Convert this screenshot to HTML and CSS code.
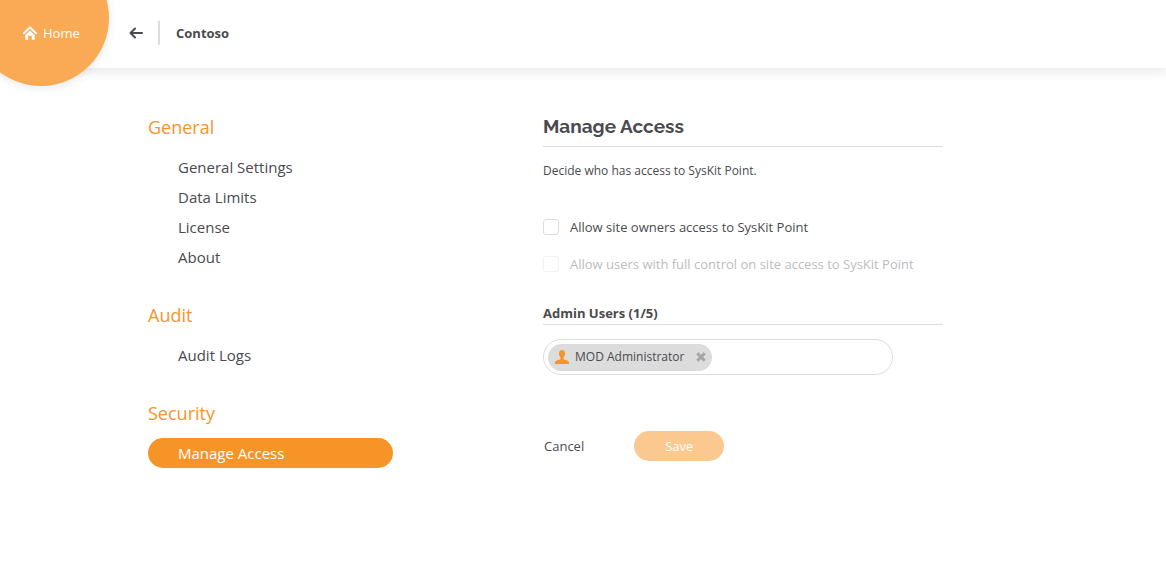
FILE: index.html
```html
<!DOCTYPE html>
<html lang="en">
<head>
<meta charset="utf-8">
<meta name="viewport" content="width=device-width, initial-scale=1">
<title>Manage Access - Contoso</title>
<link rel="stylesheet" href="styles.css">
</head>
<body>
<header class="topbar">
  <a class="home" href="#">
    <svg class="home-icon" viewBox="0 0 14 14" aria-hidden="true">
      <path d="M1 7.200 7 1.400l6 5.800" fill="none" stroke="currentColor" stroke-width="2" stroke-linecap="round" stroke-linejoin="round"/>
      <path d="M7 4.600 11.800 9.200V13q0 .8-.8.8H8.800V10.500q0-.8-.8-.8H6q-.8 0-.8.8v3.300H3q-.8 0-.8-.8V9.200z" fill="currentColor"/>
    </svg>
    <span>Home</span>
  </a>
  <button class="back" type="button" aria-label="Back">
    <svg class="back-icon" viewBox="0 0 14 12" aria-hidden="true">
      <path d="M13 6H2M6 1.500 1.500 6 6 10.500" fill="none" stroke="currentColor" stroke-width="2" stroke-linecap="round" stroke-linejoin="round"/>
    </svg>
  </button>
  <span class="tenant">Contoso</span>
</header>
<div class="page">
  <nav class="sidebar" aria-label="Settings">
    <section>
      <h2 class="group-title">General</h2>
      <ul class="group-list">
        <li><a class="nav-link" href="#">General Settings</a></li>
        <li><a class="nav-link" href="#">Data Limits</a></li>
        <li><a class="nav-link" href="#">License</a></li>
        <li><a class="nav-link" href="#">About</a></li>
      </ul>
    </section>
    <section>
      <h2 class="group-title">Audit</h2>
      <ul class="group-list">
        <li><a class="nav-link" href="#">Audit Logs</a></li>
      </ul>
    </section>
    <section>
      <h2 class="group-title">Security</h2>
      <ul class="group-list">
        <li><a class="nav-link nav-link-active" href="#" aria-current="page">Manage Access</a></li>
      </ul>
    </section>
  </nav>
  <main class="content">
    <h1 class="title">Manage Access</h1>
    <p class="intro">Decide who has access to SysKit Point.</p>
    <form>
      <div class="options">
        <label class="option"><input class="check" type="checkbox"><span>Allow site owners access to SysKit Point</span></label>
        <label class="option option-disabled"><input class="check" type="checkbox" disabled><span>Allow users with full control on site access to SysKit Point</span></label>
      </div>
      <label class="field-title" for="admins">Admin Users (1/5)</label>
      <div class="picker">
        <span class="chip">
          <svg class="user-icon" viewBox="0 0 14 14" aria-hidden="true">
            <path d="M7 0C9 0 10 1.300 10 3.400 10 5.400 9.300 6.500 8.600 7.200V9.200C9.500 10 13.800 10.200 14 12.300V14H0V12.300C.2 10.200 4.500 10 5.400 9.200V7.200C4.700 6.500 4 5.400 4 3.400 4 1.300 5 0 7 0z" fill="currentColor"/>
          </svg>
          <span>MOD Administrator</span>
          <button class="remove" type="button" aria-label="Remove MOD Administrator">
            <svg class="remove-icon" viewBox="0 0 10 10" aria-hidden="true">
              <path d="M1.300 1.300l7.400 7.400M8.700 1.300 1.300 8.700" stroke="currentColor" stroke-width="3"/>
            </svg>
          </button>
        </span>
        <input class="picker-input" id="admins" type="text">
      </div>
      <div class="actions">
        <button class="cancel" type="button">Cancel</button>
        <button class="save" type="submit" disabled>Save</button>
      </div>
    </form>
  </main>
</div>
</body>
</html>
```
FILE: styles.css
```css
* {
  box-sizing: border-box;
}

body {
  margin: 0;
  background: #fff;
  color: #4a4a4f;
  font-family: "Segoe UI", "Open Sans", sans-serif;
  font-size: 13px;
  line-height: 20px;
}

h1, h2, p, ul {
  margin: 0;
  padding: 0;
}

button, input {
  font: inherit;
  color: inherit;
}

button {
  padding: 0;
  border: 0;
  background: none;
}

svg {
  display: block;
}

a {
  color: inherit;
  text-decoration: none;
}

.topbar {
  position: relative;
  display: flex;
  align-items: center;
  height: 68px;
  padding: 0 24px 2px 23px;
  box-shadow: 0 4px 10px rgba(0, 0, 0, 0.09);
}

.topbar::before {
  content: "";
  position: absolute;
  top: -50px;
  left: -27px;
  width: 136px;
  height: 136px;
  border-radius: 50%;
  background: #faa954;
  box-shadow: 0 2px 10px rgba(0, 0, 0, 0.09);
}

.home {
  position: relative;
  display: flex;
  align-items: center;
  gap: 6px;
  width: 106px;
  color: #fff;
}

.home-icon {
  width: 14px;
  height: 14px;
}

.back {
  display: flex;
  align-items: center;
  width: 31px;
  height: 24px;
  border-right: 2px solid #dcdcdc;
}

.back-icon {
  width: 14px;
  height: 12px;
}

.tenant {
  margin-left: 16px;
  font-weight: 700;
}

.page {
  display: flex;
  gap: 150px;
  padding: 47px 24px 48px 148px;
}

.sidebar {
  display: flex;
  flex-direction: column;
  gap: 31px;
  flex: 0 0 245px;
}

.group-title {
  margin-bottom: 13px;
  color: #f79428;
  font-size: 18px;
  font-weight: 400;
  line-height: 24px;
}

.group-list {
  list-style: none;
}

.nav-link {
  display: block;
  padding-left: 30px;
  border-radius: 15px;
  font-size: 15px;
  line-height: 30px;
}

.nav-link-active {
  background: #f79428;
  color: #fff;
}

.content {
  flex: 0 1 400px;
}

.title {
  padding-bottom: 8px;
  border-bottom: 1px solid #dcdcdc;
  font-family: Raleway, Lato, sans-serif;
  font-size: 19px;
  font-weight: 700;
  line-height: 23px;
}

.intro {
  margin-top: 14px;
  font-size: 12px;
}

.options {
  display: flex;
  flex-direction: column;
  gap: 17px;
  margin: 36px 0 29px;
}

.option {
  display: flex;
  align-items: center;
  gap: 11px;
}

.option-disabled {
  color: #bcbcbe;
}

.check {
  appearance: none;
  flex: none;
  width: 16px;
  height: 16px;
  margin: 0;
  border: 1px solid #dcdcdc;
  border-radius: 3px;
  background: #fff;
}

.check:disabled {
  border-color: #f2f2f2;
}

.check:checked {
  background: #f79428;
}

.field-title {
  display: block;
  padding-bottom: 1px;
  border-bottom: 1px solid #dcdcdc;
  font-weight: 700;
}

.picker {
  display: flex;
  align-items: center;
  max-width: 350px;
  height: 36px;
  margin-top: 14px;
  padding: 0 16px 0 4px;
  border: 1px solid #dcdcdc;
  border-radius: 18px;
}

.chip {
  display: flex;
  align-items: center;
  flex: none;
  height: 27px;
  padding: 0 6px 0 7px;
  border-radius: 14px;
  background: #dcdcdc;
  font-size: 12px;
}

.user-icon {
  width: 14px;
  height: 14px;
  margin-right: 6px;
  color: #f79428;
}

.remove {
  margin-left: 12px;
  color: #a5a5a5;
}

.remove-icon {
  width: 10px;
  height: 10px;
}

.picker-input {
  flex: 1;
  min-width: 0;
  margin-left: 8px;
  border: 0;
  outline: 0;
  background: none;
}

.actions {
  display: flex;
  align-items: center;
  gap: 50px;
  margin-top: 56px;
  padding-left: 1px;
}

.save {
  width: 90px;
  height: 30px;
  border-radius: 15px;
  background: #fbc990;
  color: #fff;
}
```
